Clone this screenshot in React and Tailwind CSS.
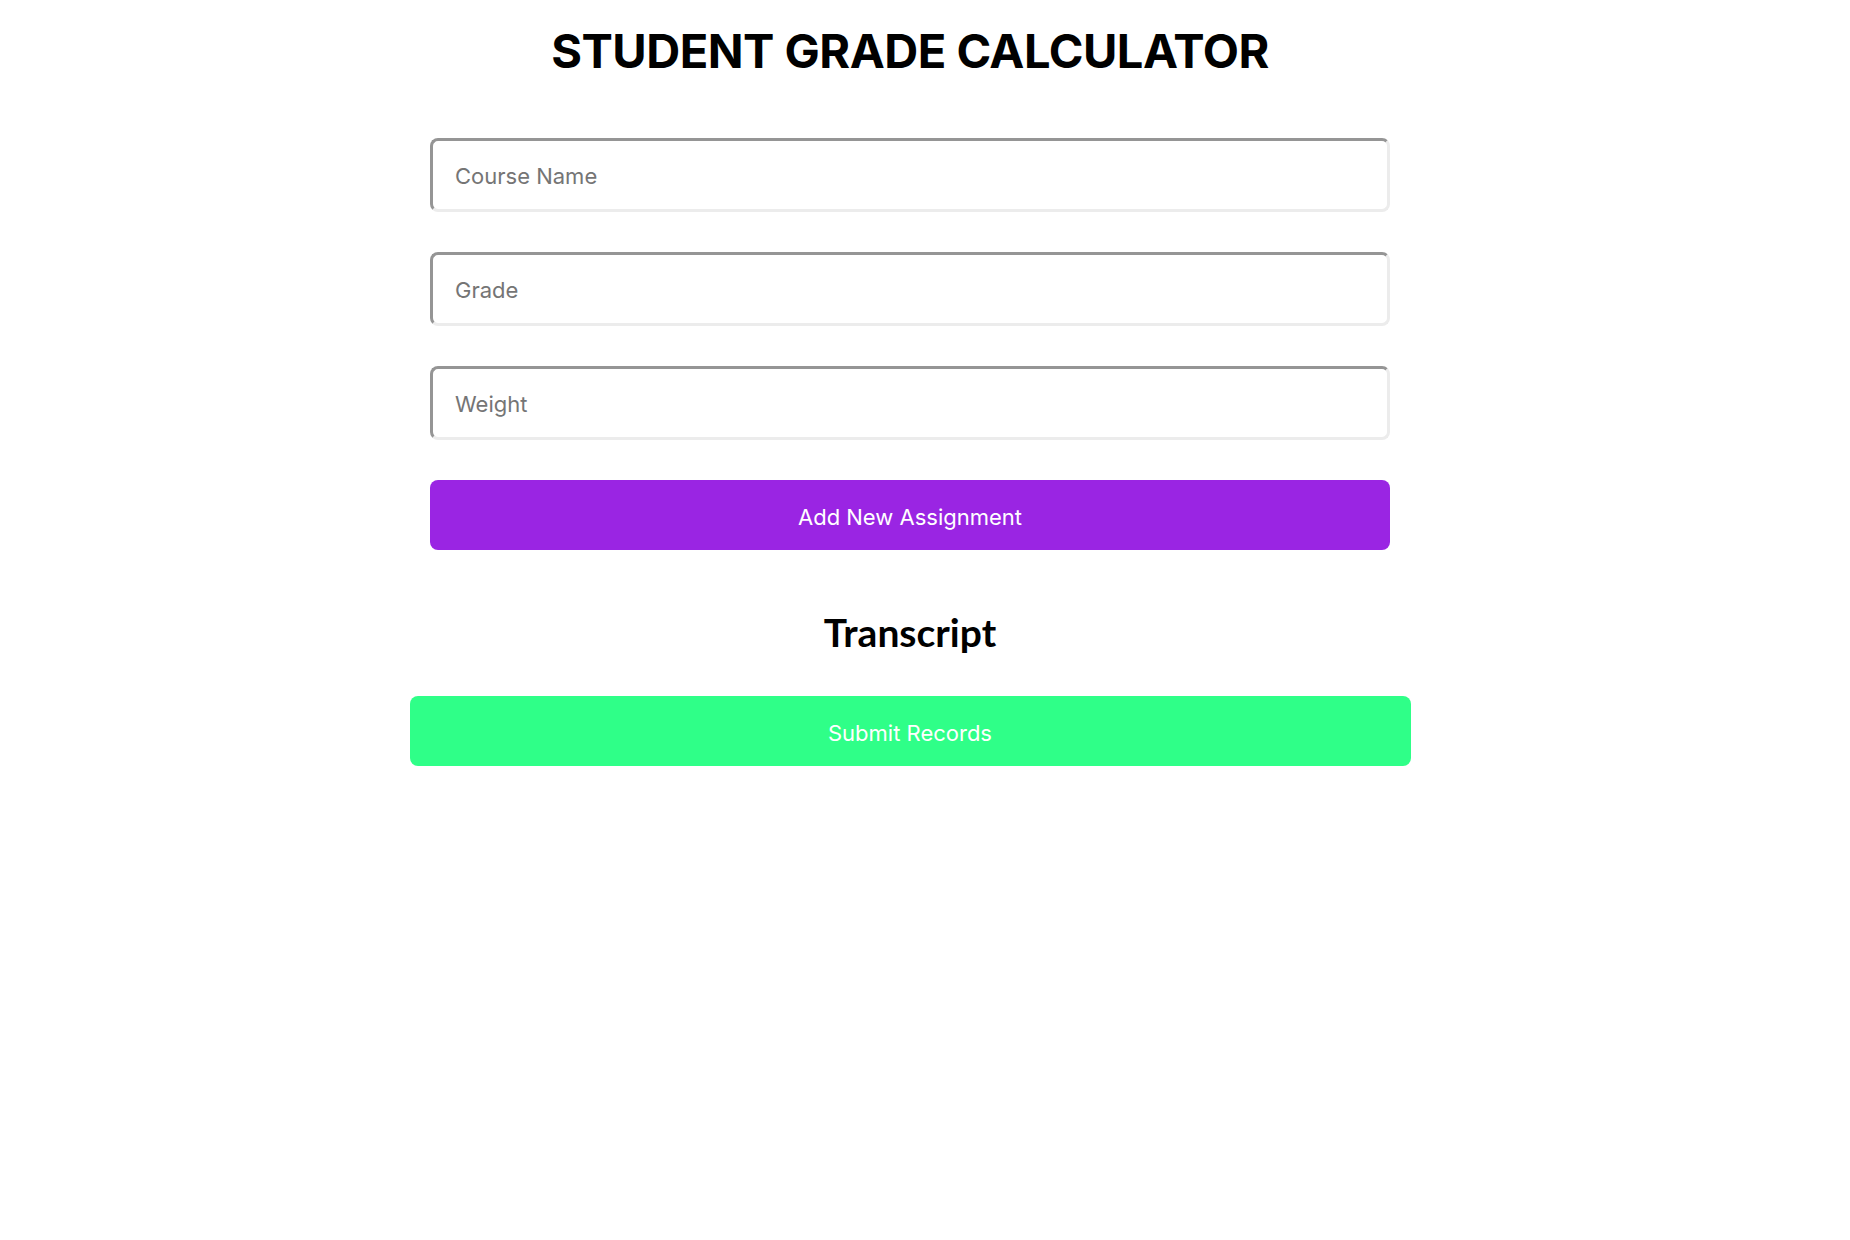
export default function App() {
  const inputCls =
    "w-full h-[74px] rounded-lg border-[3px] border-solid border-t-[#959595] border-l-[#959595] border-r-[#ececec] border-b-[#ececec] bg-white px-[22px] pt-[2px] text-[22px] text-black placeholder:text-[#757575] outline-none";
  return (
    <div className="min-h-screen w-full bg-white pr-[30px]" style={{ fontFamily: "Inter, 'Liberation Sans', sans-serif" }}>
      <div className="mx-auto flex w-[1001px] flex-col items-center">
        <h1 className="mt-[27px] text-[47px] font-bold leading-[48px] text-black tracking-[-0.5px]">
          STUDENT GRADE CALCULATOR
        </h1>
        <div className="mt-[63px] flex w-[960px] flex-col gap-[40px]">
          <input className={inputCls} placeholder="Course Name" />
          <input className={inputCls} placeholder="Grade" />
          <input className={inputCls} placeholder="Weight" />
          <button className="h-[70px] w-full rounded-lg bg-[#9a25e3] pt-[4px] text-[22px] text-white">
            Add New Assignment
          </button>
        </div>
        <h2
          className="mt-[62px] text-[39px] font-bold leading-[40px] text-black"
          style={{ fontFamily: "Lato, 'Noto Sans', sans-serif" }}
        >
          Transcript
        </h2>
        <button className="mt-[44px] h-[70px] w-[1001px] rounded-lg bg-[#2fff88] pt-[4px] text-[22px] text-white">
          Submit Records
        </button>
      </div>
    </div>
  );
}
